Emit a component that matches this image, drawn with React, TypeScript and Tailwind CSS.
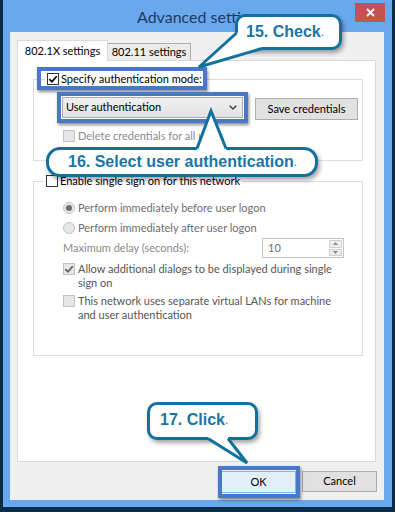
import React from "react";

const UI = "font-['Lato','Noto_Sans',sans-serif] text-[11px]";
const CALLOUT_TEXT = "font-['Liberation_Sans',Arial,sans-serif] font-bold text-[16px] leading-none text-[#1776a6]";

function Check({ color }: { color: string }) {
  return (
    <svg width="10" height="10" viewBox="0 0 10 10">
      <path d="M1.3 5.2 L3.9 7.8 L8.7 2.2" fill="none" stroke={color} strokeWidth="1.7" />
    </svg>
  );
}

function CheckBox({ checked, disabled }: { checked?: boolean; disabled?: boolean }) {
  return (
    <span
      className={
        disabled
          ? "flex h-[12px] w-[12px] shrink-0 items-center justify-center border border-[#c2c2c2] bg-[#e6e6e6]"
          : "flex h-[12px] w-[12px] shrink-0 items-center justify-center border border-[#333333] bg-white"
      }
    >
      {checked && <Check color={disabled ? "#5a5a5a" : "#000000"} />}
    </span>
  );
}

function Radio({ checked }: { checked?: boolean }) {
  return (
    <span className="flex h-[12px] w-[12px] shrink-0 items-center justify-center rounded-full border border-[#c2c2c2] bg-[#e6e6e6]">
      {checked && <span className="h-[6px] w-[6px] rounded-full bg-[#6d6d6d]" />}
    </span>
  );
}

export default function App() {
  return (
    <div className={`relative h-[512px] w-[395px] overflow-hidden bg-[#0b2c49] pb-[5px] pl-[3px] pr-[3px] ${UI}`}>
      {/* window frame */}
      <div className="flex h-full flex-col bg-[#6aa8ee] pb-[7px] pl-[7px] pr-[8px]">
        {/* title bar */}
        <div className="flex h-[32px] shrink-0 items-start">
          <div className="flex-1 pl-[127px] pt-[7px] text-[16px] leading-[20px] text-[#233a5e]">Advanced settings</div>
          <div className="-mr-[1px] mt-[3px] flex h-[19px] w-[30px] items-center justify-center bg-[#c75050]">
            <svg width="9" height="9" viewBox="0 0 9 9">
              <path d="M1 1 L8 8 M8 1 L1 8" stroke="#ffffff" strokeWidth="1.8" />
            </svg>
          </div>
        </div>

        {/* client area */}
        <div className="flex flex-1 flex-col bg-[#f0f0f0] pl-[7px] pr-[8px] pt-[8px]">
          {/* tabs */}
          <div className="relative z-10 flex h-[20px] items-end">
            <div className="-mb-[1px] flex h-[21px] w-[91px] items-center justify-center border border-b-0 border-[#d9d9d9] bg-white text-black">
              802.1X settings
            </div>
            <div className="flex h-[17px] w-[83px] items-center justify-center border border-b-0 border-l-0 border-[#acacac] bg-[#ececec] text-black">
              802.11 settings
            </div>
          </div>

          {/* tab panel */}
          <div className="flex h-[402px] flex-col border border-[#d9d9d9] bg-white">
            {/* group 1 */}
            <div className="ml-[15px] mt-[18px] flex h-[82px] w-[330px] flex-col border border-[#dcdcdc]">
              <div className="-mt-[7px] ml-[11px] flex h-[12px]">
                <span className="inline-flex items-center gap-[2px] bg-white px-[2px] text-black">
                  <CheckBox checked />
                  <span>Specify authentication mode:</span>
                </span>
              </div>
              <div className="ml-[28px] mt-[12px] flex items-start">
                <div className="flex h-[21px] w-[181px] items-center justify-between border border-[#acacac] bg-gradient-to-b from-[#f0f0f0] to-[#e3e3e3] pl-[3px] pr-[5px] text-black">
                  <span>User authentication</span>
                  <svg width="8" height="5" viewBox="0 0 8 5">
                    <path d="M0.7 0.7 L4 4 L7.3 0.7" fill="none" stroke="#404040" strokeWidth="1.4" />
                  </svg>
                </div>
                <div className="ml-[12px] mt-[1px] flex h-[22px] w-[103px] items-center justify-center border border-[#adadad] bg-[#e1e1e1] text-black">
                  Save credentials
                </div>
              </div>
              <div className="ml-[29px] mt-[10px] flex h-[12px] items-center gap-[3px] text-[#8a8a8a]">
                <CheckBox disabled />
                <span>Delete credentials for all users</span>
              </div>
            </div>

            {/* group 2 */}
            <div className="ml-[15px] mt-[20px] flex h-[175px] w-[330px] flex-col border border-[#dcdcdc]">
              <div className="-mt-[7px] ml-[10px] flex h-[12px]">
                <span className="inline-flex items-center gap-[2px] bg-white px-[2px] text-black">
                  <CheckBox />
                  <span>Enable single sign on for this network</span>
                </span>
              </div>
              <div className="ml-[29px] mt-[14px] flex h-[14px] items-center gap-[3px] text-[#6d6d6d]">
                <Radio checked />
                <span>Perform immediately before user logon</span>
              </div>
              <div className="ml-[29px] mt-[6px] flex h-[14px] items-center gap-[3px] text-[#6d6d6d]">
                <Radio />
                <span>Perform immediately after user logon</span>
              </div>
              <div className="ml-[29px] mt-[3px] flex h-[20px] items-center text-[#8a8a8a]">
                <span>Maximum delay (seconds):</span>
                <div className="ml-auto mr-[18px] flex h-[20px] w-[82px] items-stretch border border-[#c4c4c4] bg-white">
                  <span className="flex flex-1 items-center pl-[5px] text-[#6d6d6d]">10</span>
                  <div className="flex w-[15px] flex-col gap-[1px] p-[1px]">
                    <div className="flex flex-1 items-center justify-center border border-[#d0d0d0] bg-[#ececec]">
                      <svg width="5" height="3" viewBox="0 0 5 3"><path d="M0 3 L2.5 0 L5 3 Z" fill="#8a8a8a" /></svg>
                    </div>
                    <div className="flex flex-1 items-center justify-center border border-[#d0d0d0] bg-[#ececec]">
                      <svg width="5" height="3" viewBox="0 0 5 3"><path d="M0 0 L2.5 3 L5 0 Z" fill="#8a8a8a" /></svg>
                    </div>
                  </div>
                </div>
              </div>
              <div className="ml-[29px] mt-[4px] flex items-start gap-[3px] text-[#555555]">
                <span className="mt-[1px]"><CheckBox checked disabled /></span>
                <span className="whitespace-nowrap leading-[14px]">
                  Allow additional dialogs to be displayed during single
                  <br />
                  sign on
                </span>
              </div>
              <div className="ml-[29px] mt-[4px] flex items-start gap-[3px] text-[#555555]">
                <span className="mt-[1px]"><CheckBox disabled /></span>
                <span className="whitespace-nowrap leading-[14px]">
                  This network uses separate virtual LANs for machine
                  <br />
                  and user authentication
                </span>
              </div>
            </div>
          </div>

          {/* buttons */}
          <div className="-mr-[1px] flex justify-end gap-[6px] pt-[9px]">
            <div className="flex h-[22px] w-[75px] items-center justify-center border border-[#7eb4ea] bg-[#e3eefb] text-black">OK</div>
            <div className="flex h-[21px] w-[75px] items-center justify-center border border-[#adadad] bg-[#e1e1e1] text-black">Cancel</div>
          </div>
        </div>
      </div>

      {/* highlight boxes */}
      <div className="absolute left-[37px] top-[67px] h-[23px] w-[170px] border-[4px] border-[#4a78c6] shadow-[1px_2px_3px_rgba(0,0,0,0.45)]" />
      <div className="absolute left-[57px] top-[92px] h-[31px] w-[191px] border-[4px] border-[#4a78c6] shadow-[1px_2px_3px_rgba(0,0,0,0.45)]" />
      <div className="absolute left-[218px] top-[466px] h-[32px] w-[82px] border-[4px] border-[#4a78c6] shadow-[1px_2px_3px_rgba(0,0,0,0.45)]" />

      {/* callouts */}
      <div className={`absolute left-[235px] top-[14px] flex h-[36px] w-[107px] items-center rounded-[10px] border-[3px] border-[#12719c] bg-white pl-[8px] shadow-[2px_3px_4px_rgba(0,0,0,0.35)] ${CALLOUT_TEXT}`}>
        15. Check<span className="text-[12px] font-normal">.</span>
      </div>
      <div className={`absolute left-[46px] top-[147px] flex h-[30px] w-[272px] items-center rounded-[14px] border-[3px] border-[#12719c] bg-white pl-[19px] shadow-[2px_3px_4px_rgba(0,0,0,0.35)] ${CALLOUT_TEXT}`}>
        16. Select user authentication<span className="text-[12px] font-normal">.</span>
      </div>
      <div className={`absolute left-[147px] top-[402px] flex h-[38px] w-[111px] items-center rounded-[10px] border-[3px] border-[#12719c] bg-white pb-[2px] pl-[10px] shadow-[2px_3px_4px_rgba(0,0,0,0.35)] ${CALLOUT_TEXT}`}>
        17. Click<span className="text-[12px] font-normal">.</span>
      </div>

      {/* callout tails */}
      <svg className="pointer-events-none absolute left-0 top-0" width="395" height="512" viewBox="0 0 395 512">
        <polygon points="236.5,33 199,67 262,48.5 262,44 245,40 240,32" fill="#ffffff" />
        <polyline points="236.5,33 199,67 262,48.5" fill="none" stroke="#12719c" strokeWidth="3" />
        <polygon points="197,148.5 211,111 226,148.5 226,152 197,152" fill="#ffffff" />
        <polyline points="197,148.5 211,111 226,148.5" fill="none" stroke="#12719c" strokeWidth="3" />
        <polygon points="208,438.5 247,463 228,438.5 228,435 208,435" fill="#ffffff" />
        <polyline points="208,438.5 247,463 228,438.5" fill="none" stroke="#12719c" strokeWidth="3" />
      </svg>
    </div>
  );
}
